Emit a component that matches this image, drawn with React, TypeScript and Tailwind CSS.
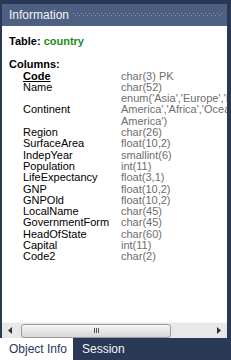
import React from 'react';

type Column = { name: string; type: string[]; key?: boolean };

const columns: Column[] = [
  { name: 'Code', type: ['char(3) PK'], key: true },
  { name: 'Name', type: ['char(52)'] },
  { name: 'Continent', type: ["enum('Asia','Europe','North", "America','Africa','Oceania','Antarctica','South", "America')"] },
  { name: 'Region', type: ['char(26)'] },
  { name: 'SurfaceArea', type: ['float(10,2)'] },
  { name: 'IndepYear', type: ['smallint(6)'] },
  { name: 'Population', type: ['int(11)'] },
  { name: 'LifeExpectancy', type: ['float(3,1)'] },
  { name: 'GNP', type: ['float(10,2)'] },
  { name: 'GNPOld', type: ['float(10,2)'] },
  { name: 'LocalName', type: ['char(45)'] },
  { name: 'GovernmentForm', type: ['char(45)'] },
  { name: 'HeadOfState', type: ['char(60)'] },
  { name: 'Capital', type: ['int(11)'] },
  { name: 'Code2', type: ['char(2)'] },
];

function DottedFill() {
  return (
    <svg className="flex-1 h-[4px]" preserveAspectRatio="none">
      <defs>
        <pattern id="dots" width="4" height="4" patternUnits="userSpaceOnUse">
          <rect x="0" y="0" width="1" height="1" fill="#8595b0" />
          <rect x="2" y="2" width="1" height="1" fill="#8595b0" />
        </pattern>
      </defs>
      <rect width="100%" height="100%" fill="url(#dots)" />
    </svg>
  );
}

function ScrollBar() {
  return (
    <div className="h-[16px] bg-[#e8e8e8] border-t border-[#f4f4f4] flex items-center">
      <div className="w-[16px] flex justify-center">
        <svg width="4" height="7" viewBox="0 0 4 7"><path d="M4 0 L0 3.5 L4 7 Z" fill="#333" /></svg>
      </div>
      <div className="w-[150px] h-[14px] ml-[3px] rounded-[3px] border border-[#9a9a9a] bg-gradient-to-b from-[#f6f6f6] to-[#d6d6d6] flex items-center justify-center gap-[1px]">
        <div className="w-[1px] h-[5px] bg-[#555]" />
        <div className="w-[1px] h-[5px] bg-[#555]" />
        <div className="w-[1px] h-[5px] bg-[#555]" />
      </div>
      <div className="flex-1" />
      <div className="w-[16px] flex justify-center">
        <svg width="4" height="7" viewBox="0 0 4 7"><path d="M0 0 L4 3.5 L0 7 Z" fill="#333" /></svg>
      </div>
    </div>
  );
}

export default function App() {
  return (
    <div className="w-[231px] h-[360px] bg-[#293955] flex flex-col overflow-hidden" style={{ fontFamily: '"Liberation Sans", Arial, sans-serif' }}>
      <div className="flex-1 flex flex-col pt-[4px] pl-[2px] pr-[4px] min-h-0">
        <div className="h-[22px] bg-[#4d6082] flex items-center pl-[7px] pr-[4px] gap-[4px]">
          <span className="text-[12px] text-[#f4f4f4] leading-none">Information</span>
          <DottedFill />
        </div>
        <div className="flex-1 bg-white overflow-hidden pl-[7px] text-[11px] leading-[11.3px] text-black">
          <div className="mt-[10px] font-bold">
            Table: <span className="text-[#1d8a1d]">country</span>
          </div>
          <div className="mt-[12px] font-bold">Columns:</div>
          <div className="grid grid-cols-[98px_max-content] items-center pl-[14px]">
            {columns.map((c) => (
              <React.Fragment key={c.name}>
                <div className={c.key ? 'font-bold underline' : ''}>{c.name}</div>
                <div className="text-[#6d6d6d] whitespace-nowrap">
                  {c.type.map((t) => (
                    <div key={t}>{t}</div>
                  ))}
                </div>
              </React.Fragment>
            ))}
          </div>
        </div>
        <ScrollBar />
      </div>
      <div className="h-[22px] flex items-stretch text-[12px]">
        <div className="w-[73px] bg-white text-[#1e395b] flex items-center pl-[9px]">Object Info</div>
        <div className="text-[#f4f4f4] flex items-center pl-[9px]">Session</div>
      </div>
    </div>
  );
}
